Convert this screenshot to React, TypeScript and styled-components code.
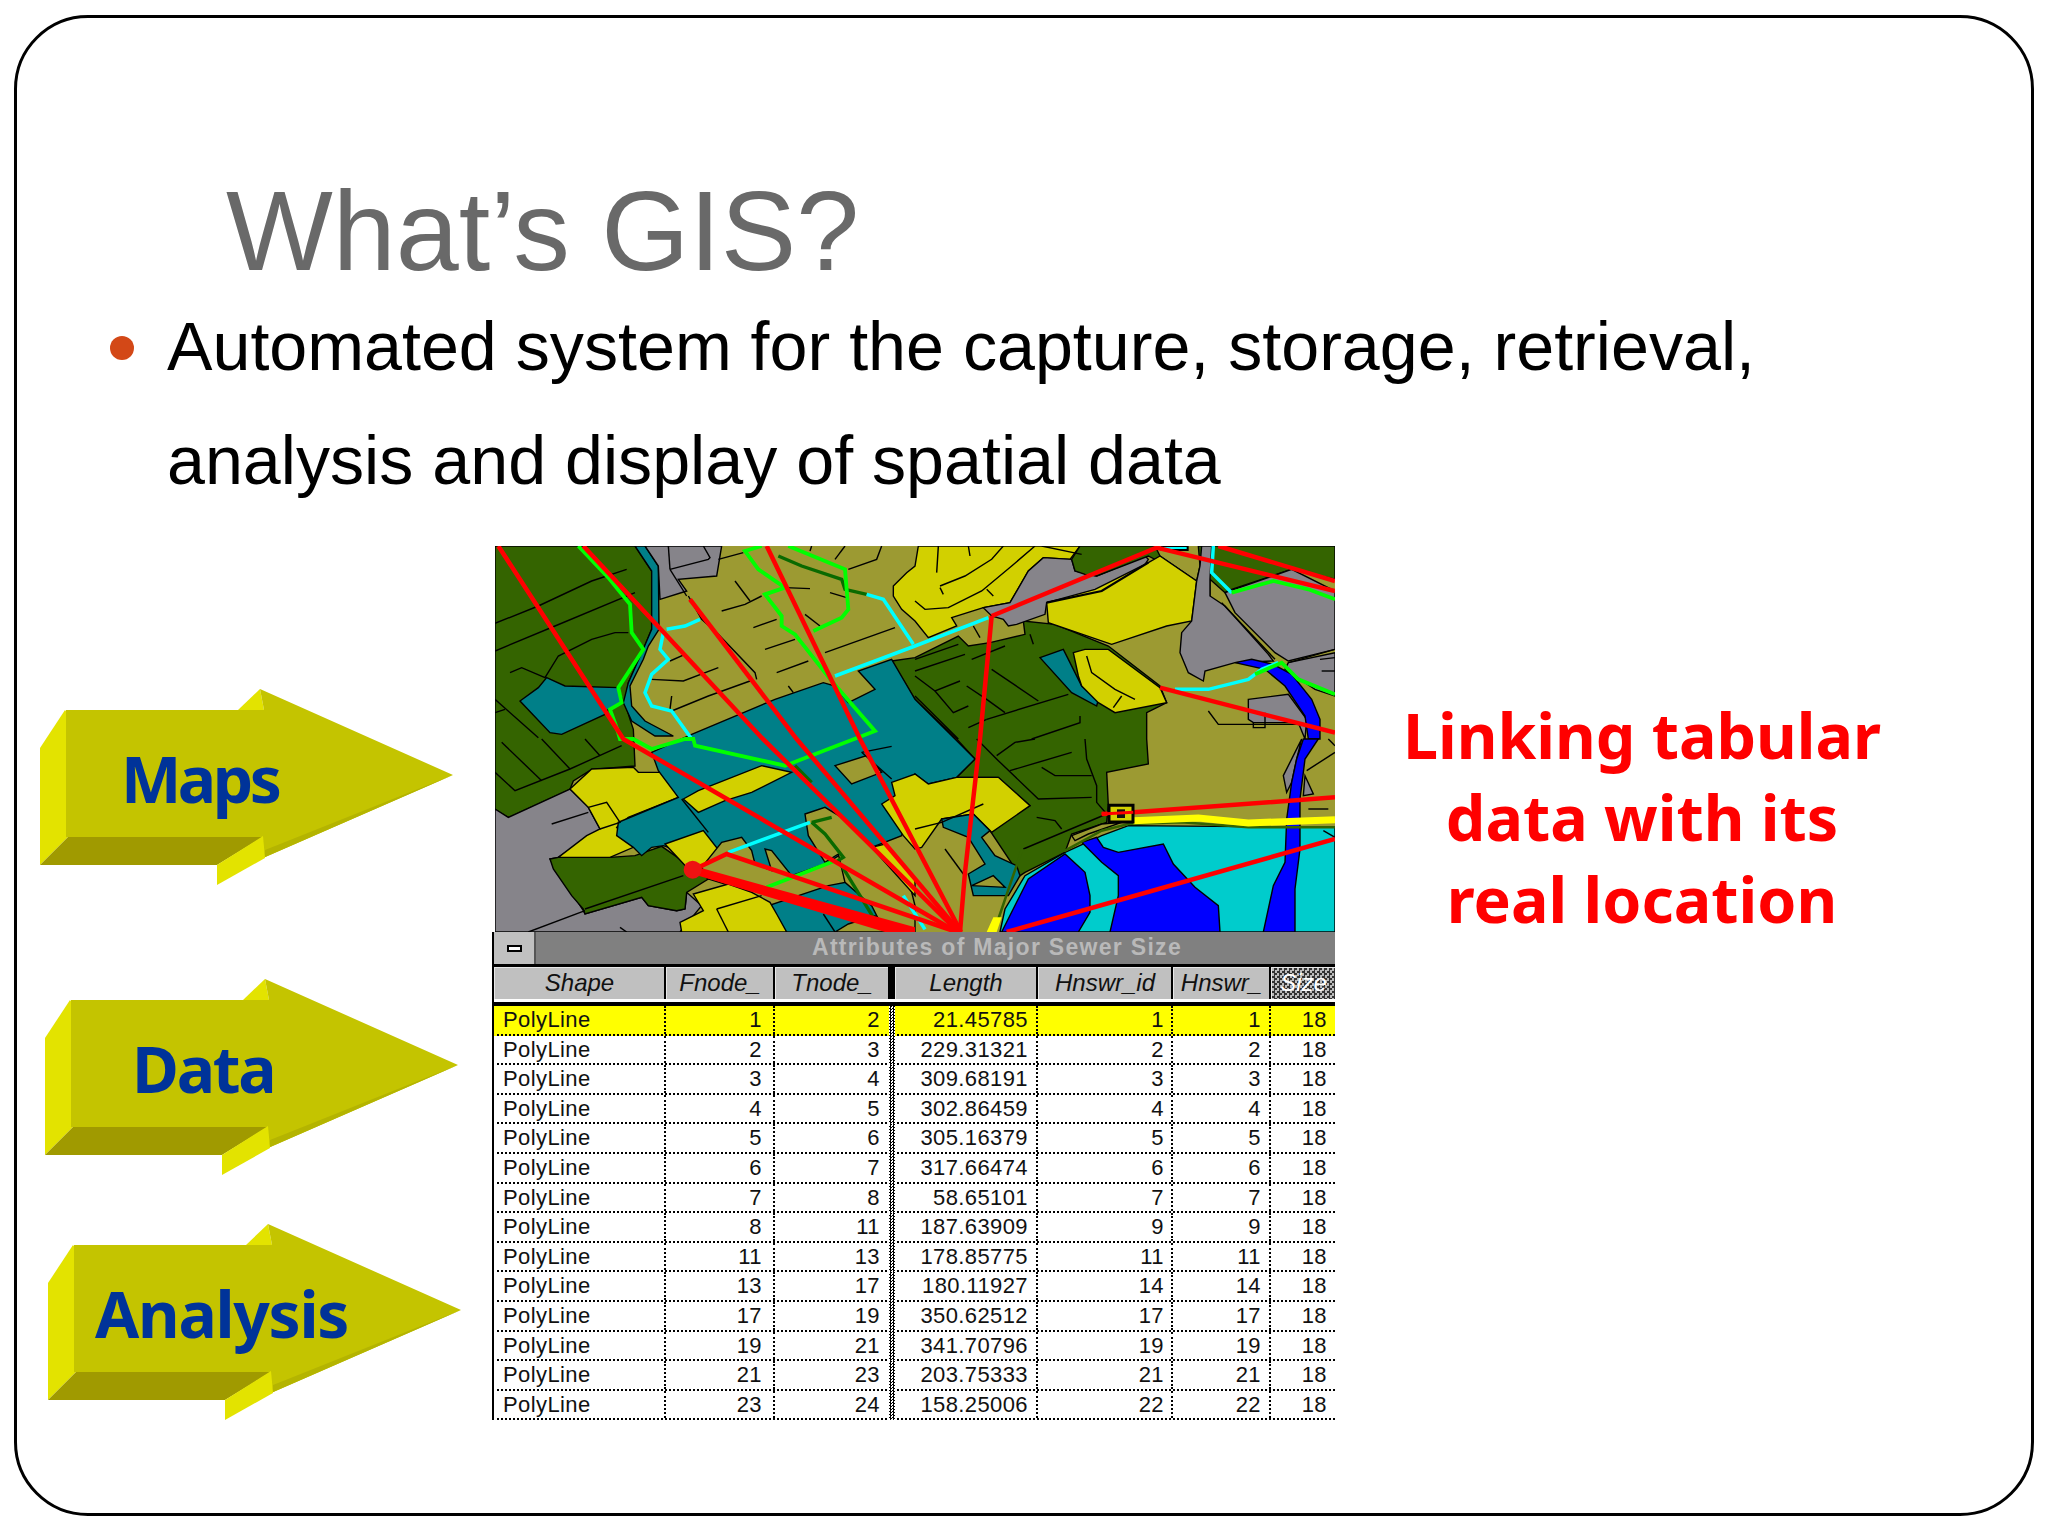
import React from "react";
import styled, { createGlobalStyle } from "styled-components";

const GlobalStyle = createGlobalStyle`
  html, body {
    margin: 0;
    padding: 0;
    background: #fff;
  }
`;

const Slide = styled.div`
  box-sizing: border-box;
  width: 2020px;
  height: 1501px;
  margin: 15px 0 0 14px;
  padding-top: 155px;
  background: #fff;
  border: 3px solid #000;
  border-radius: 74px;
  font-family: "Liberation Sans", Arial, sans-serif;
`;

const Title = styled.h1`
  margin: 0 0 0 209px;
  font-size: 113.2px;
  line-height: 116px;
  font-weight: 400;
  color: #696969;
`;

const Points = styled.ul`
  margin: 0;
  padding: 0 0 0 150px;
  list-style: none;
`;

const Point = styled.li`
  position: relative;
  font-size: 68.2px;
  line-height: 114px;
  color: #000;

  &::before {
    content: "";
    position: absolute;
    left: -57px;
    top: 47px;
    width: 24px;
    height: 24px;
    border-radius: 50%;
    background: #d34817;
  }
`;

const Lower = styled.div`
  display: flex;
  margin-top: 29px;
`;

const ArrowColumn = styled.div`
  box-sizing: border-box;
  width: 475px;
  padding: 143px 0 0 23px;
`;

const ArrowBox = styled.div<{ $shift: number; $drop: number }>`
  position: relative;
  width: 414px;
  height: 197px;
  margin-left: ${(p) => p.$shift}px;
  margin-top: ${(p) => p.$drop}px;

  svg {
    display: block;
  }
`;

const ArrowLabel = styled.span<{ $left: number; $spacing: number }>`
  position: absolute;
  left: ${(p) => p.$left}px;
  top: 48px;
  font-family: "Noto Sans", "Open Sans", sans-serif;
  font-size: 64px;
  line-height: 84px;
  font-weight: 700;
  letter-spacing: ${(p) => p.$spacing}px;
  color: #003399;
`;

const Figure = styled.div`
  width: 843px;
`;

const MapView = styled.svg`
  display: block;
  width: 840px;
  height: 386px;
  margin-left: 3px;

  * {
    vector-effect: non-scaling-stroke;
  }
`;

const TitleBar = styled.div`
  display: flex;
  height: 32px;
  background: #808080;
  border-left: 2px solid #000;
`;

const MinButton = styled.div`
  display: flex;
  align-items: center;
  justify-content: center;
  box-sizing: border-box;
  width: 42px;
  background: #c0c0c0;
  border-right: 2px solid #555;

  &::after {
    content: "";
    box-sizing: border-box;
    width: 15px;
    height: 7px;
    background: #fff;
    border: 2px solid #000;
  }
`;

const TitleText = styled.div`
  margin-left: 276px;
  font-size: 23px;
  line-height: 30px;
  font-weight: 700;
  letter-spacing: 1.3px;
  white-space: nowrap;
  color: #b9b9b9;
`;

const columns = "172px 109px 120px 143px 135px 98px 64px";

const HeaderRow = styled.div`
  display: grid;
  grid-template-columns: ${columns};
  position: relative;
  height: 35px;
  padding-top: 3px;
  background: #000;
  border-left: 2px solid #000;
  border-bottom: 4px solid #000;

  &::after {
    content: "";
    position: absolute;
    left: 0;
    right: 0;
    bottom: 0;
    height: 3px;
    background: #fff;
  }
`;

const HeaderCell = styled.div<{ $gap?: number; $selected?: boolean }>`
  box-sizing: border-box;
  height: 32px;
  margin-right: ${(p) => p.$gap ?? 2}px;
  overflow: hidden;
  text-align: center;
  font-size: 24px;
  line-height: 30px;
  font-style: italic;
  white-space: nowrap;
  color: ${(p) => (p.$selected ? "#fff" : "#111")};
  background: ${(p) =>
    p.$selected
      ? "conic-gradient(#333 25%, #bbb 0 50%, #333 0 75%, #bbb 0) 0 0 / 5px 5px"
      : "#c0c0c0"};
  border-top: 1px solid #e8e8e8;
  border-left: 1px solid #e8e8e8;
`;

const DataRow = styled.div<{ $active?: boolean }>`
  display: grid;
  grid-template-columns: ${columns};
  box-sizing: border-box;
  height: 29.6px;
  background: ${(p) => (p.$active ? "#ffff00" : "#fff")};
  border-left: 2px solid #000;
  border-bottom: 2px dotted #000;
`;

const DataCell = styled.div<{ $pad: number; $left?: boolean; $thick?: boolean }>`
  position: relative;
  box-sizing: border-box;
  padding: 0 ${(p) => (p.$left ? 0 : p.$pad)}px 0 ${(p) => (p.$left ? p.$pad : 0)}px;
  text-align: ${(p) => (p.$left ? "left" : "right")};
  font-size: 22px;
  line-height: 27px;
  letter-spacing: 0.4px;
  color: #111;
  border-right: ${(p) => (p.$thick ? "0" : "2px dotted #000")};

  &:last-child {
    border-right: 0;
  }

  ${(p) =>
    p.$thick
      ? `&::after {
          content: "";
          position: absolute;
          right: 0;
          top: 0;
          bottom: -2px;
          width: 6px;
          background: conic-gradient(#000 25%, #fff 0 50%, #000 0 75%, #fff 0) 0 0 / 3px 3px;
        }`
      : ""}
`;

const Caption = styled.div`
  width: 614px;
  padding-top: 148px;
  text-align: center;
  font-family: "Noto Sans", "Open Sans", sans-serif;
  font-size: 62.7px;
  line-height: 82px;
  font-weight: 700;
  color: #ff0000;
`;

const OLIVE = "#9c9a32";
const DARK = "#346400";
const GREY = "#86848a";
const TEAL = "#007f88";
const YELLOW = "#d2d000";
const AQUA = "#00cccc";
const BLUE = "#0000ff";

// the map was traced in four quarters, each 1260x579 at 3x
const offsets = {
  tl: "translate(0 0)",
  tr: "translate(1260 0)",
  bl: "translate(0 579)",
  br: "translate(1260 579)",
};

type Quarter = keyof typeof offsets;
type Region = { q: Quarter; fill: string; pts: string };

const regions: Region[] = [
  { q: "tl", fill: DARK, pts: "0,0 420,0 440,30 470,75 470,250 445,310 400,410 390,470 405,520 415,550 420,660 290,670 235,705 225,730 40,815 0,790" },
  { q: "tl", fill: TEAL, pts: "420,0 450,0 490,60 492,250 460,300 445,340 405,420 410,480 450,525 535,570 480,570 410,525 385,470 400,410 440,320 470,250 470,75" },
  { q: "tl", fill: TEAL, pts: "155,395 210,420 370,425 385,470 340,490 330,505 200,565 165,560 75,465 130,425" },
  { q: "tl", fill: GREY, pts: "450,0 680,0 665,90 550,100 575,135 495,160 490,60" },
  { q: "bl", fill: GREY, pts: "0,210 40,235 225,150 280,205 315,270 190,355 165,360 265,515 270,525 440,475 460,500 545,515 570,510 575,460 620,500 555,579 0,579" },
  { q: "bl", fill: DARK, pts: "165,360 190,355 345,355 420,350 500,322 640,420 575,460 570,510 545,515 460,500 440,475 270,525 265,510 230,470 175,390" },
  { q: "bl", fill: YELLOW, pts: "225,150 290,90 415,85 430,100 510,100 550,175 400,235 365,265 415,325 345,355 190,355 275,290 315,270 280,205" },
  { q: "tr", fill: DARK, pts: "-70,345 0,335 130,270 160,300 225,290 330,265 325,225 420,235 580,300 735,420 755,470 695,500 695,579 700,654 575,679 580,779 575,829 470,864 450,919 330,979 315,989 225,854 345,779 250,694 125,694 180,639 125,579 0,460" },
  { q: "bl", fill: TEAL, pts: "590,-14 840,-119 985,-169 1020,-159 1060,-109 1140,-149 1090,-204 1190,-239 1260,-119 1380,0 1440,60 1385,115 1300,135 1260,105 1220,290 1130,325 1240,579 840,579 800,470 740,400 505,320 470,325 440,350 415,325 365,290 370,250 550,175 490,95 470,40" },
  { q: "tr", fill: YELLOW, pts: "-65,120 -25,80 0,60 10,0 495,0 465,40 385,35 340,75 285,170 205,185 110,215 125,240 40,275 0,225 -40,190 -65,150" },
  { q: "tr", fill: GREY, pts: "205,185 285,170 340,75 385,35 470,40 480,75 545,90 690,30 700,40 680,70 560,135 395,170 390,205 305,235 280,240 265,220 230,210" },
  { q: "tr", fill: DARK, pts: "495,0 720,0 735,30 845,105 855,60 850,0 1260,0 1260,100 1130,70 950,130 930,140 885,100 885,150 845,105 700,30 545,90 510,85 480,75 470,40" },
  { q: "tr", fill: YELLOW, pts: "395,170 540,130 700,50 735,30 845,105 830,225 755,240 590,295 400,230" },
  { q: "tr", fill: GREY, pts: "855,60 860,0 890,0 885,100 885,150 930,180 1060,325 1075,345 960,350 870,375 865,405 820,380 795,320 800,260 830,225 845,105" },
  { q: "tr", fill: GREY, pts: "930,140 1130,70 1260,135 1260,310 1120,345 1080,320 960,200" },
  { q: "tr", fill: GREY, pts: "1120,350 1260,320 1260,450 1200,430 1110,370" },
  { q: "tr", fill: GREY, pts: "1000,460 1120,445 1175,520 1170,579 1150,530 1015,530 1000,520" },
  { q: "tr", fill: TEAL, pts: "375,335 445,310 465,350 500,420 550,460 545,480 470,440" },
  { q: "tr", fill: YELLOW, pts: "475,320 510,310 580,310 735,425 755,470 600,500 550,470 500,420 490,390" },
  { q: "tr", fill: BLUE, pts: "960,350 1010,340 1075,355 1130,385 1190,460 1215,520 1215,579 1180,579 1170,510 1110,420 1050,370" },
  { q: "bl", fill: OLIVE, pts: "1020,80 1115,50 1160,100 1070,135" },
  { q: "bl", fill: YELLOW, pts: "565,180 610,155 800,80 890,100 770,160 690,185 610,220" },
  { q: "bl", fill: YELLOW, pts: "510,315 625,275 680,345 620,380 575,385" },
  { q: "bl", fill: OLIVE, pts: "620,385 680,310 740,295 770,335 780,375 830,395 810,330 830,335 890,410 990,375 1040,345 1050,430 1000,440 820,500 770,460 640,420" },
  { q: "bl", fill: YELLOW, pts: "595,465 700,435 770,460 825,490 845,525 875,579 560,579 555,550 625,515" },
  { q: "bl", fill: OLIVE, pts: "930,225 990,205 1040,235 1130,320 1240,420 1260,500 1260,579 1170,579 1130,500 1050,430 1030,345 990,370 940,290" },
  { q: "bl", fill: OLIVE, pts: "1020,579 1060,555 1140,530 1200,579" },
  { q: "bl", fill: YELLOW, pts: "1130,325 1170,315 1260,420 1260,470" },
  { q: "bl", fill: YELLOW, pts: "1160,195 1200,170 1190,130 1260,105 1300,135 1385,115 1510,115 1605,200 1490,280 1435,225 1340,240 1280,325 1260,330 1225,290" },
  { q: "br", fill: TEAL, pts: "80,240 175,225 225,275 200,295 240,350 305,380 315,410 280,470 175,470 160,405 210,375 160,295 85,265" },
  { q: "br", fill: OLIVE, pts: "170,440 235,410 270,445" },
  { q: "br", fill: AQUA, pts: "255,579 270,510 330,410 450,340 560,290 640,260 1260,265 1260,579" },
  { q: "br", fill: BLUE, pts: "260,579 340,420 450,345 510,400 525,470 525,520 490,579" },
  { q: "br", fill: BLUE, pts: "500,310 545,295 565,325 610,340 745,315 775,375 840,445 910,500 915,579 585,579 610,470 610,410 560,370" },
  { q: "br", fill: OLIVE, pts: "470,290 560,255 620,250 520,285 480,305" },
  { q: "br", fill: GREY, pts: "1105,110 1140,40 1160,0 1145,60 1130,130 1115,160" },
  { q: "br", fill: GREY, pts: "1170,110 1195,165 1165,170" },
  { q: "br", fill: BLUE, pts: "1165,0 1210,0 1170,60 1155,180 1155,330 1140,450 1140,579 1045,579 1075,440 1110,370 1115,240 1130,130 1145,60" },
];

const streets: { q: Quarter; lines: string[] }[] = [
  {
    q: "tl",
    lines: [
      "0,232 130,180 290,105 395,70",
      "0,315 180,240 420,140",
      "45,380 80,365 150,395 190,330 290,280 360,260 400,260",
      "0,460 130,575",
      "0,500 30,490",
      "520,0 525,70",
      "525,70 640,40 645,35 625,0",
      "525,70 575,150",
      "580,150 620,220 670,265 780,380 785,400",
      "670,40 745,20",
      "680,195 750,175 800,150",
      "720,105 765,165",
      "775,245 845,220",
      "810,310 900,280",
      "845,380 940,345",
      "990,320 1200,245",
      "470,400 565,405 670,365",
      "530,495 640,450 765,405",
      "530,450 525,490",
      "525,345 570,325",
      "870,125 945,128",
      "1005,140 1055,155",
      "930,205 975,240",
      "950,0 945,15",
      "1020,40 1050,0",
      "1060,70 1145,40 1160,0",
      "880,420 895,440",
    ],
  },
  {
    q: "bl",
    lines: [
      "20,10 140,125",
      "140,0 225,90",
      "270,0 315,50",
      "0,100 60,155 225,90 380,20",
      "170,255 280,220",
      "280,205 335,190 375,250 315,270",
      "560,180 640,280",
      "270,510 565,410",
      "100,579 270,515",
      "375,565 395,579",
      "665,510 800,470",
      "665,510 700,579",
      "985,525 1020,579",
      "1100,40 1190,22",
      "1100,40 1190,120",
    ],
  },
  {
    q: "tr",
    lines: [
      "70,0 65,80",
      "160,0 165,30",
      "75,120 150,90 230,40 265,0",
      "0,165 30,190 100,185 200,135 290,60 360,0",
      "75,125 85,145",
      "215,130 235,150",
      "380,0 500,25",
      "175,240 195,275",
      "345,265 355,295",
      "0,340 130,295",
      "0,375 150,325",
      "170,340 270,300",
      "0,390 60,435 135,405",
      "60,435 115,500 160,480",
      "155,420 215,460 270,500",
      "230,370 370,465",
      "215,520 460,445",
      "495,510 495,530 350,579",
      "160,545 215,520",
      "0,450 130,579",
      "880,495 910,535 1150,535",
      "1015,530 1015,545 1050,545 1050,500",
      "515,330 530,380 600,430 660,460",
      "620,450 595,485",
      "1120,350 1260,310",
      "1215,340 1260,335",
      "1220,375 1260,375",
      "920,170 1080,340",
    ],
  },
  {
    q: "br",
    lines: [
      "185,0 250,65 370,180 530,175",
      "285,95 470,40",
      "245,50 300,10 360,0",
      "380,85 420,110 530,110",
      "510,0 515,60 545,140 545,190 575,225",
      "365,235 420,245 440,270",
      "325,330 575,225",
      "0,270 80,250 205,195",
      "90,330 145,405",
      "1175,95 1260,40",
      "1180,210 1240,210",
      "1240,0 1260,20",
      "1225,275 1260,295",
    ],
  },
];

// the rest is in whole-map coordinates
const darkPaths = [
  "850,30 920,60 1040,100 1050,130 1115,145",
  "950,829 1010,814",
  "950,829 990,864 1045,934 1020,949",
  "1040,959 1150,1139",
  "900,659 950,709",
];

const cyanPaths = [
  "515,250 570,240 615,220",
  "505,260 495,310 520,340 470,385 450,440 470,480 530,495 590,579",
  "1020,390 1260,300 1480,215",
  "1115,145 1165,160 1255,295",
  "2040,430 2140,430 2260,400 2300,370 2350,350",
  "2155,0 2150,80 2210,140",
  "700,919 945,829",
  "1225,1049 1290,1150",
];

const greenPaths = [
  "250,0 340,95 405,175 410,260 445,310 370,425 380,470 345,490 365,545 375,579 415,579 470,609 570,579 595,579 600,599 870,659 1140,555 1010,405 900,265 860,240 860,210 810,145 870,125 790,70 750,15 800,0",
  "880,0 1050,70 1060,190 1040,215 955,255",
  "2210,140 2335,105 2440,130 2520,160",
  "2280,385 2360,350 2410,400 2520,445",
  "815,1024 1020,944",
];

const redPaths = [
  "10,0 385,579 1385,1158",
  "265,0 800,575 1390,1158",
  "585,160 905,579 1395,1158",
  "815,0 1095,579 1398,1158",
  "1490,210 1455,579 1410,979 1395,1158",
  "1490,210 1985,5 2520,135",
  "2170,0 2520,105",
  "1995,425 2520,560",
  "1535,1158 2520,879",
  "1820,804 1915,799 2520,754",
  "600,969 695,924 1385,1158",
];

const Trace = ({ paths, colour, width }: { paths: string[]; colour: string; width: number }) => (
  <>
    {paths.map((pts, i) => (
      <polyline key={i} points={pts} fill="none" stroke={colour} strokeWidth={width} />
    ))}
  </>
);

const MapDrawing = () => (
  <MapView viewBox="0 0 2520 1158">
    <rect width="2520" height="1158" fill={OLIVE} />
    {regions.map((r, i) => (
      <polygon key={i} transform={offsets[r.q]} points={r.pts} fill={r.fill} stroke="#000" strokeWidth="1.4" />
    ))}
    {streets.map((group) => (
      <g key={group.q} transform={offsets[group.q]}>
        <Trace paths={group.lines} colour="#000" width={1.4} />
      </g>
    ))}
    <polyline points="1960,50 1820,135 1655,170" fill="none" stroke="#000" strokeWidth="2.2" />
    <polyline points="1510,1119 1580,914 1710,914 1820,854 1900,834 2060,829 2260,844 2520,844" fill="none" stroke={DARK} strokeWidth="2.5" />
    <polyline points="1915,824 2110,816 2260,831 2520,821" fill="none" stroke="#ffff00" strokeWidth="7" />
    <polygon points="1475,1158 1495,1114 1520,1114 1505,1158" fill="#ffff00" />
    <rect x="2000" y="0" width="78" height="12" fill="#00ffff" stroke="#000" strokeWidth="2" />
    <Trace paths={darkPaths} colour="#0a6a00" width={3.4} />
    <Trace paths={cyanPaths} colour="#00ffff" width={3.5} />
    <Trace paths={greenPaths} colour="#00ff00" width={3.8} />
    <Trace paths={redPaths} colour="#ff0000" width={4.5} />
    <polygon points="610,964 1260,1144 1260,1158 1170,1158 610,989" fill="#ff0000" />
    <circle cx="593" cy="971" r="27" fill="#ee1212" />
    <rect x="1842" y="778" width="72" height="50" fill="#d2d000" stroke="#000" strokeWidth="3" />
    <rect x="1866" y="790" width="24" height="26" fill="#111" />
    <polyline points="1820,804 1915,799" fill="none" stroke="#ff0000" strokeWidth="3" />
  </MapView>
);

const ArrowShape = () => (
  <svg width="414" height="197" viewBox="40 689 414 197">
    <polygon points="40,748 65,710 68,714 68,837 40,865" fill="#e3e300" />
    <polygon points="40,865 68,837 263,837 217,865" fill="#a09a00" />
    <polygon points="238,710 260,689 264,710" fill="#e3e300" />
    <polygon points="66,710 264,710 260,689 453,775 263,858 263,837 66,837" fill="#c4c400" />
    <polygon points="263,858 453,775 265,850" fill="#b4b400" />
    <polygon points="217,865 263,836 265,858 217,885" fill="#e3e300" />
  </svg>
);

const arrows = [
  { label: "Maps", shift: 0, drop: 0, left: 81, spacing: -3.5 },
  { label: "Data", shift: 5, drop: 93, left: 87, spacing: -2.2 },
  { label: "Analysis", shift: 8, drop: 48, left: 47, spacing: -1.25 },
];

const rows = [
  [1, 2, "21.45785", 1, 1],
  [2, 3, "229.31321", 2, 2],
  [3, 4, "309.68191", 3, 3],
  [4, 5, "302.86459", 4, 4],
  [5, 6, "305.16379", 5, 5],
  [6, 7, "317.66474", 6, 6],
  [7, 8, "58.65101", 7, 7],
  [8, 11, "187.63909", 9, 9],
  [11, 13, "178.85775", 11, 11],
  [13, 17, "180.11927", 14, 14],
  [17, 19, "350.62512", 17, 17],
  [19, 21, "341.70796", 19, 19],
  [21, 23, "203.75333", 21, 21],
  [23, 24, "158.25006", 22, 22],
];

export default function App() {
  return (
    <>
      <GlobalStyle />
      <Slide>
        <Title>What’s GIS?</Title>
        <Points>
          <Point>
            Automated system for the capture, storage, retrieval,
            <br />
            analysis and display of spatial data
          </Point>
        </Points>
        <Lower>
          <ArrowColumn>
            {arrows.map((a) => (
              <ArrowBox key={a.label} $shift={a.shift} $drop={a.drop}>
                <ArrowShape />
                <ArrowLabel $left={a.left} $spacing={a.spacing}>
                  {a.label}
                </ArrowLabel>
              </ArrowBox>
            ))}
          </ArrowColumn>
          <Figure>
            <MapDrawing />
            <TitleBar>
              <MinButton />
              <TitleText>Attributes of Major Sewer Size</TitleText>
            </TitleBar>
            <HeaderRow>
              <HeaderCell>Shape</HeaderCell>
              <HeaderCell>Fnode_</HeaderCell>
              <HeaderCell $gap={7}>Tnode_</HeaderCell>
              <HeaderCell>Length</HeaderCell>
              <HeaderCell>Hnswr_id</HeaderCell>
              <HeaderCell>Hnswr_</HeaderCell>
              <HeaderCell $gap={0} $selected>
                Size
              </HeaderCell>
            </HeaderRow>
            {rows.map((r, i) => (
              <DataRow key={i} $active={i === 0}>
                <DataCell $pad={9} $left>
                  PolyLine
                </DataCell>
                <DataCell $pad={11}>{r[0]}</DataCell>
                <DataCell $pad={15} $thick>
                  {r[1]}
                </DataCell>
                <DataCell $pad={8}>{r[2]}</DataCell>
                <DataCell $pad={7}>{r[3]}</DataCell>
                <DataCell $pad={8}>{r[4]}</DataCell>
                <DataCell $pad={8}>18</DataCell>
              </DataRow>
            ))}
          </Figure>
          <Caption>
            Linking tabular
            <br />
            data with its
            <br />
            real location
          </Caption>
        </Lower>
      </Slide>
    </>
  );
}
